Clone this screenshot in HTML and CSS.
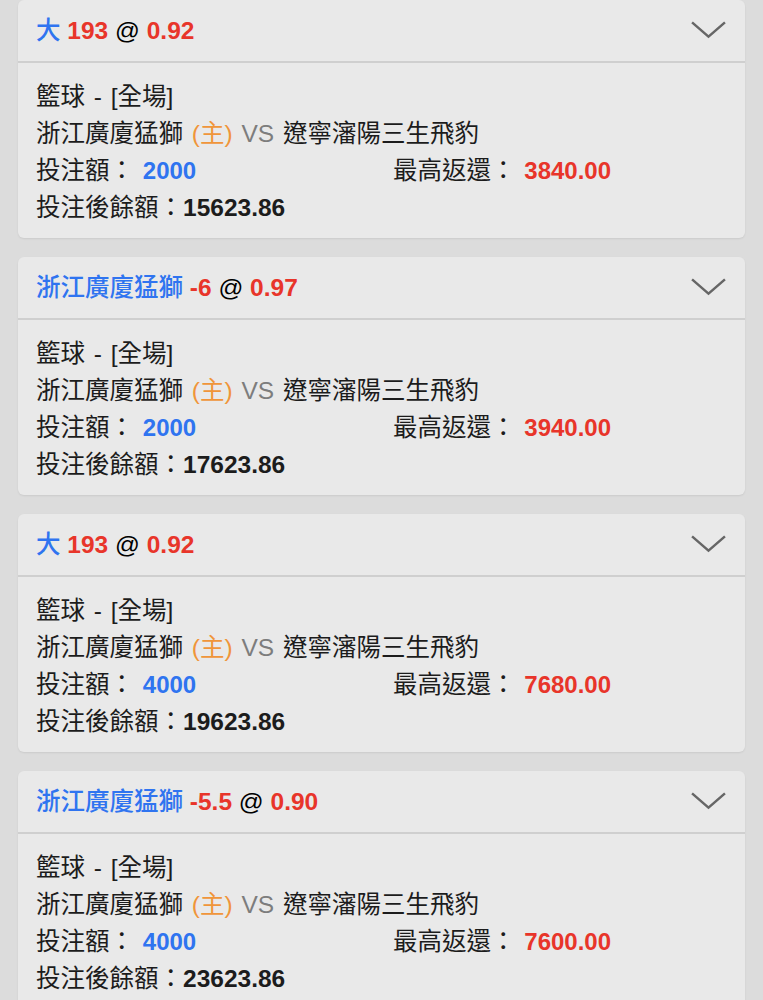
FILE: index.html
```html
<!DOCTYPE html>
<html lang="zh-Hant">
<head>
    <meta charset="utf-8">
    <meta name="viewport" content="width=device-width, initial-scale=1">
    <title>投注記錄</title>
    <link rel="stylesheet" href="styles.css">
</head>
<body>
    <div class="list">
        <div class="bet-card">
            <div class="bet-head">
                <div class="bet-title"><span class="blue">大</span> <span class="red num">193</span> <span class="at">@</span> <span class="red num">0.92</span></div>
                <svg class="chevron" viewBox="0 0 36 20"><path d="M2 3 L18 17 L34 3"/></svg>
            </div>
            <div class="bet-body">
                <div class="line">籃球 - [全場]</div>
                <div class="line">浙江廣廈猛獅 <span class="home">(主)</span> <span class="vs">VS</span> 遼寧瀋陽三生飛豹</div>
                <div class="line cols">
                    <div class="col">投注額： <span class="blue num">2000</span></div>
                    <div class="col">最高返還： <span class="red num">3840.00</span></div>
                </div>
                <div class="line">投注後餘額：<span class="num">15623.86</span></div>
            </div>
        </div>

        <div class="bet-card">
            <div class="bet-head">
                <div class="bet-title"><span class="blue">浙江廣廈猛獅</span> <span class="red num">-6</span> <span class="at">@</span> <span class="red num">0.97</span></div>
                <svg class="chevron" viewBox="0 0 36 20"><path d="M2 3 L18 17 L34 3"/></svg>
            </div>
            <div class="bet-body">
                <div class="line">籃球 - [全場]</div>
                <div class="line">浙江廣廈猛獅 <span class="home">(主)</span> <span class="vs">VS</span> 遼寧瀋陽三生飛豹</div>
                <div class="line cols">
                    <div class="col">投注額： <span class="blue num">2000</span></div>
                    <div class="col">最高返還： <span class="red num">3940.00</span></div>
                </div>
                <div class="line">投注後餘額：<span class="num">17623.86</span></div>
            </div>
        </div>

        <div class="bet-card">
            <div class="bet-head">
                <div class="bet-title"><span class="blue">大</span> <span class="red num">193</span> <span class="at">@</span> <span class="red num">0.92</span></div>
                <svg class="chevron" viewBox="0 0 36 20"><path d="M2 3 L18 17 L34 3"/></svg>
            </div>
            <div class="bet-body">
                <div class="line">籃球 - [全場]</div>
                <div class="line">浙江廣廈猛獅 <span class="home">(主)</span> <span class="vs">VS</span> 遼寧瀋陽三生飛豹</div>
                <div class="line cols">
                    <div class="col">投注額： <span class="blue num">4000</span></div>
                    <div class="col">最高返還： <span class="red num">7680.00</span></div>
                </div>
                <div class="line">投注後餘額：<span class="num">19623.86</span></div>
            </div>
        </div>

        <div class="bet-card">
            <div class="bet-head">
                <div class="bet-title"><span class="blue">浙江廣廈猛獅</span> <span class="red num">-5.5</span> <span class="at">@</span> <span class="red num">0.90</span></div>
                <svg class="chevron" viewBox="0 0 36 20"><path d="M2 3 L18 17 L34 3"/></svg>
            </div>
            <div class="bet-body">
                <div class="line">籃球 - [全場]</div>
                <div class="line">浙江廣廈猛獅 <span class="home">(主)</span> <span class="vs">VS</span> 遼寧瀋陽三生飛豹</div>
                <div class="line cols">
                    <div class="col">投注額： <span class="blue num">4000</span></div>
                    <div class="col">最高返還： <span class="red num">7600.00</span></div>
                </div>
                <div class="line">投注後餘額：<span class="num">23623.86</span></div>
            </div>
        </div>
    </div>
</body>
</html>
```

FILE: styles.css
```css
* { box-sizing: border-box; margin: 0; padding: 0; }
body { background: #dcdcdc; color: #1c1c1c; font-family: "Liberation Sans", "Noto Sans CJK TC", sans-serif; font-size: 24.5px; }
.list { padding: 0 18px; display: flex; flex-direction: column; gap: 19px; }
.bet-card { background: #e9e9e9; border-radius: 6px; box-shadow: 0 1px 2px rgba(0, 0, 0, 0.08); overflow: hidden; }
.bet-head { height: 63px; display: flex; align-items: center; justify-content: space-between; padding: 0 18px 5px; border-bottom: 2px solid #cfcfcf; }
.bet-title { font-weight: 500; }
.chevron { width: 37px; height: 21px; fill: none; stroke: #666; stroke-width: 2.4; margin-top: 3px; }
.bet-body { padding: 15px 18px 12px; }
.line { line-height: 37px; height: 37px; white-space: nowrap; word-spacing: 2px; }
.cols { display: flex; }
.col:first-child { width: 357px; }
.cols .num { font-size: 24px; }
.num { font-weight: 700; }
.blue { color: #2f74f0; }
.red { color: #e8352a; }
.at { color: #000; }
.home { color: #f0953a; }
.vs { color: #7d7d7d; }
```
